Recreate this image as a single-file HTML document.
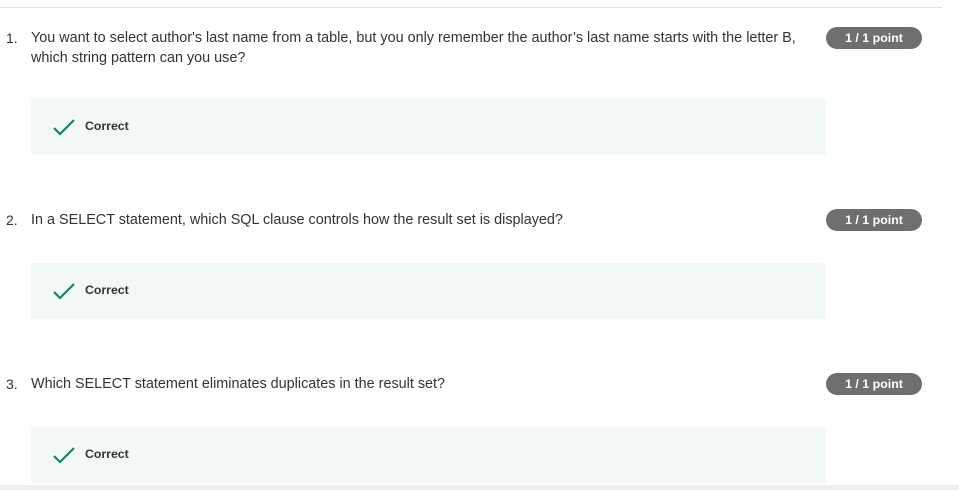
<!DOCTYPE html>
<html><head><style>
body{margin:0;width:959px;height:490px;background:#fff;position:relative;overflow:hidden;font-family:"Liberation Sans",sans-serif;color:#333}
.hr{position:absolute;left:0;top:7px;width:942px;height:1px;background:#e2e2e2}
.q{position:absolute;font-size:14.4px;line-height:20px;white-space:nowrap}
.n{position:absolute;left:6px;font-size:14px;line-height:20px}
.b{position:absolute;left:826px;width:96px;height:22px;border-radius:11px;background:#6f6f6f;color:#fff;font-size:12.4px;font-weight:bold;text-align:center;line-height:22px}
.box{position:absolute;left:31px;width:795px;height:56px;background:#f2f8f6}
.box svg{position:absolute;left:22px;top:19px}
.box span{position:absolute;left:54px;top:20px;font-size:12.3px;font-weight:bold;color:#333}
.foot{position:absolute;left:0;top:485px;width:959px;height:5px;background:#eee}
</style></head><body>
<div class="hr"></div>
<div class="n" style="top:28px">1.</div>
<div class="q" style="left:31px;top:28px">You want to select author's last name from a table, but you only remember the author’s last name starts with the letter B,<br>which string pattern can you use?</div>
<div class="b" style="top:27px">1 / 1 point</div>
<div class="box" style="top:99px"><svg width="22" height="18" viewBox="0 0 22 18"><path d="M1 10 L7 16 L21 2" fill="none" stroke="#1f8354" stroke-width="2.2"/></svg><span>Correct</span></div>
<div class="n" style="top:210px">2.</div>
<div class="q" style="left:31px;top:210px">In a SELECT statement, which SQL clause controls how the result set is displayed?</div>
<div class="b" style="top:209px">1 / 1 point</div>
<div class="box" style="top:263px"><svg width="22" height="18" viewBox="0 0 22 18"><path d="M1 10 L7 16 L21 2" fill="none" stroke="#1f8354" stroke-width="2.2"/></svg><span>Correct</span></div>
<div class="n" style="top:374px">3.</div>
<div class="q" style="left:31px;top:374px">Which SELECT statement eliminates duplicates in the result set?</div>
<div class="b" style="top:373px">1 / 1 point</div>
<div class="box" style="top:427px"><svg width="22" height="18" viewBox="0 0 22 18"><path d="M1 10 L7 16 L21 2" fill="none" stroke="#1f8354" stroke-width="2.2"/></svg><span>Correct</span></div>
<div class="foot"></div>
</body></html>
